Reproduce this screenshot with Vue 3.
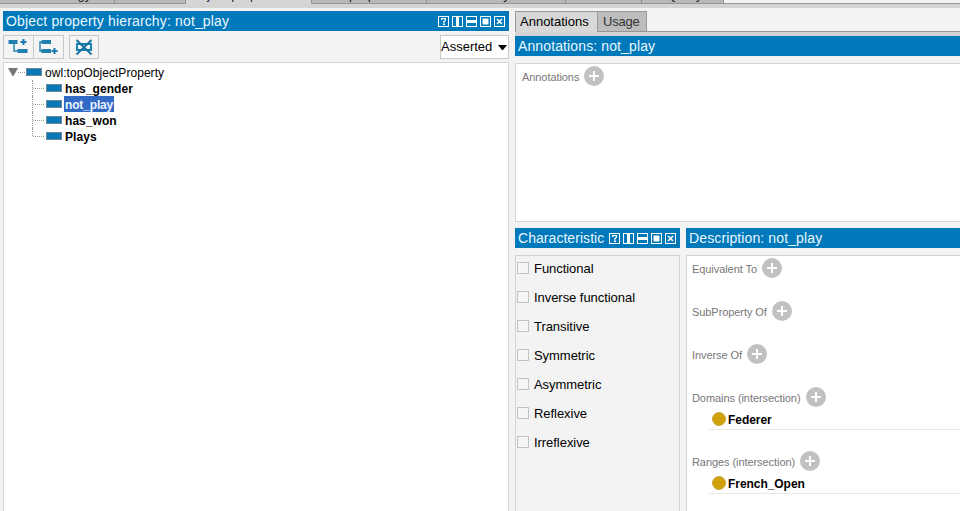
<script setup>
const topTabs = [
  { label: 'Active ontology', width: 115, pad: 3 },
  { label: 'Classes', width: 71, pad: 14 },
  { label: 'Object properties', width: 126, pad: 4, active: true },
  { label: 'Data properties', width: 115, pad: 6 },
  { label: 'Individuals by class', width: 139, pad: 4 },
  { label: 'OWLViz', width: 76, pad: 14 },
  { label: 'DL Query', width: 82, pad: 5 },
]
const properties = ['has_gender', 'not_play', 'has_won', 'Plays']
const selected = 'not_play'
const characteristics = [
  'Functional', 'Inverse functional', 'Transitive', 'Symmetric',
  'Asymmetric', 'Reflexive', 'Irreflexive',
]
const sections = [
  { label: 'Equivalent To' },
  { label: 'SubProperty Of' },
  { label: 'Inverse Of' },
  { label: 'Domains (intersection)', item: 'Federer' },
  { label: 'Ranges (intersection)', item: 'French_Open' },
]
const controls = ['help', 'vsplit', 'hsplit', 'max', 'close']
</script>

<template>
  <div class="window">
    <nav class="top-tabs">
      <div
        v-for="t in topTabs"
        :key="t.label"
        class="top-tab"
        :class="{ active: t.active }"
        :style="{ width: t.width + 'px', paddingLeft: t.pad + 'px' }"
      >{{ t.label }}</div>
      <div class="top-rest"></div>
    </nav>
    <div class="band"></div>

    <main class="body">
      <section class="left">
        <header class="title">
          <span class="title-text hierarchy-title">Object property hierarchy: not_play</span>
          <span class="controls">
            <svg v-for="c in controls" :key="c" class="control" viewBox="0 0 11 11">
              <rect x=".5" y=".5" width="10" height="10" />
              <path v-if="c === 'help'" class="fill" d="M3 2h5v1H3zM3 3h1.500v1H3zM6.500 3h1.500v2H6.500zM5 5h2v1.500H5zM5 7.500h2v1.500H5z" />
              <path v-else-if="c === 'vsplit'" class="fill" d="M4 1h3v9H4z" />
              <path v-else-if="c === 'hsplit'" class="fill" d="M1 4h9v3H1z" />
              <path v-else-if="c === 'max'" class="fill" d="M2.500 2.500h6v6h-6z" />
              <path v-else class="cross" d="M3 3l5 5M8 3L3 8" />
            </svg>
          </span>
        </header>
        <div class="toolbar">
          <button class="tool">
            <svg width="28" height="22" viewBox="0 0 28 22">
              <path class="blue" d="M3.500 4h9v4h-9zM12.500 13h10v4h-10z" />
              <path class="line" d="M9 8v7h4" />
              <path class="plus" d="M18.500 3v6M15.500 6h6" />
            </svg>
          </button>
          <button class="tool second">
            <svg width="28" height="22" viewBox="0 0 28 22">
              <path class="blue" d="M6.500 4h9.500v4H6.500zM6.500 13H16v4H6.500z" />
              <path class="line" d="M7 6H5v9h2" />
              <path class="plus" d="M19.500 12v6M16.500 15h6" />
            </svg>
          </button>
          <button class="tool third">
            <svg width="28" height="22" viewBox="0 0 28 22">
              <rect class="box" x="7" y="8" width="14" height="6" />
              <path class="strike" d="M6.500 4l15 14.500M21.500 4l-15 14.500" />
            </svg>
          </button>
          <div class="select">
            <span>Asserted</span>
            <svg width="9" height="5" viewBox="0 0 9 5"><path d="M0 0h9L5 5H4z" /></svg>
          </div>
        </div>
        <div class="tree">
          <div class="root">
            <svg class="arrow" width="10" height="8" viewBox="0 0 10 8"><path d="M0 0h10L5.500 8h-1z" /></svg>
            <i class="dots"></i>
            <i class="prop"></i>
            <span class="root-name">owl:topObjectProperty</span>
          </div>
          <div class="children">
            <div v-for="p in properties" :key="p" class="child">
              <i class="stem"></i>
              <i class="branch"></i>
              <i class="prop"></i>
              <span class="name" :class="{ selected: p === selected }">{{ p }}</span>
            </div>
          </div>
        </div>
      </section>

      <section class="right">
        <div class="tabs">
          <div class="tab current">Annotations</div>
          <div class="tab usage">Usage</div>
        </div>
        <div class="tab-band"></div>
        <header class="title wide"><span class="title-text">Annotations: not_play</span></header>
        <div class="annotations">
          <div class="label-row">
            <span>Annotations</span>
            <svg class="add" viewBox="0 0 20 20"><circle cx="10" cy="10" r="10" /><path d="M10 5v10M5 10h10" /></svg>
          </div>
        </div>
        <div class="lower">
          <section class="traits">
            <header class="title">
              <span class="title-text">Characteristic</span>
              <span class="controls">
                <svg v-for="c in controls" :key="c" class="control" viewBox="0 0 11 11">
                  <rect x=".5" y=".5" width="10" height="10" />
                  <path v-if="c === 'help'" class="fill" d="M3 2h5v1H3zM3 3h1.500v1H3zM6.500 3h1.500v2H6.500zM5 5h2v1.500H5zM5 7.500h2v1.500H5z" />
                  <path v-else-if="c === 'vsplit'" class="fill" d="M4 1h3v9H4z" />
                  <path v-else-if="c === 'hsplit'" class="fill" d="M1 4h9v3H1z" />
                  <path v-else-if="c === 'max'" class="fill" d="M2.500 2.500h6v6h-6z" />
                  <path v-else class="cross" d="M3 3l5 5M8 3L3 8" />
                </svg>
              </span>
            </header>
            <div class="trait-list">
              <label v-for="c in characteristics" :key="c" class="trait">
                <i class="check"></i><span>{{ c }}</span>
              </label>
            </div>
          </section>
          <section class="description">
            <header class="title"><span class="title-text">Description: not_play</span></header>
            <div class="desc-list">
              <div v-for="s in sections" :key="s.label" class="desc-section" :class="{ filled: s.item }">
                <div class="label-row">
                  <span>{{ s.label }}</span>
                  <svg class="add" viewBox="0 0 20 20"><circle cx="10" cy="10" r="10" /><path d="M10 5v10M5 10h10" /></svg>
                </div>
                <div v-if="s.item" class="item"><i class="dot"></i><span>{{ s.item }}</span></div>
              </div>
            </div>
          </section>
        </div>
      </section>
    </main>
  </div>
</template>

<style>
body { margin: 0; overflow: hidden; }
</style>

<style scoped>
* { box-sizing: border-box; }
.window {
  width: 960px; height: 511px; overflow: hidden;
  display: flex; flex-direction: column;
  background: #f3f3f3; color: #000;
  font: 13px "Liberation Sans", Arial, sans-serif;
}
.top-tabs { display: flex; height: 4px; flex: none; }
.top-tab {
  height: 4px; overflow: hidden; white-space: nowrap;
  display: flex; align-items: flex-end; line-height: 16px;
  background: #b8b8b8; border-right: 1px solid #909090; border-bottom: 1px solid #969696;
  color: #222;
}
.top-tab.active { background: #d5d5d5; border-bottom-color: #d5d5d5; }
.top-rest { flex: 1; border-bottom: 1px solid #969696; }
.band { height: 4px; flex: none; background: #d4d4d4; }
.body { flex: 1; min-height: 0; display: flex; gap: 6px; padding: 3px 0 0 3px; }
.left { width: 506px; display: flex; flex-direction: column; flex: none; }
.title {
  height: 20px; flex: none; display: flex; align-items: center; justify-content: space-between;
  padding: 0 4px 0 3px; background: #0079ba; color: #e9f7ff;
}
.title-text { font-size: 14px; letter-spacing: .12px; line-height: 20px; white-space: nowrap; }
.hierarchy-title { letter-spacing: .15px; }
.traits .title-text { letter-spacing: .05px; }
.controls { display: flex; gap: 3px; }
.control { width: 11px; height: 11px; fill: none; stroke: #fff; stroke-width: 1; display: block; }
.control .fill { fill: #fff; stroke: none; }
.control .cross { stroke-width: 1.7; }
.toolbar { display: flex; margin-top: 4px; height: 24px; flex: none; }
.tool {
  width: 31px; height: 24px; padding: 0; border: 1px solid #c8c8c8; background: #f4f4f4;
  display: flex; align-items: center; justify-content: center;
}
.second { margin-left: -1px; }
.third { margin-left: 5px; width: 30px; }
.blue { fill: #217fae; }
.line { fill: none; stroke: #217fae; stroke-width: 1.4; }
.plus { fill: none; stroke: #1879ac; stroke-width: 2; }
.box { fill: none; stroke: #1983b7; stroke-width: 2; }
.strike { fill: none; stroke: #176f9e; stroke-width: 1.8; }
.select {
  margin-left: auto; width: 69px; border: 1px solid #c8c8c8; background: #fff;
  display: flex; align-items: center; justify-content: space-between; padding: 0 1px 0 0;
  line-height: 22px;
}
.tree { margin-top: 3px; flex: 1; background: #fff; border: 1px solid #d5d5d5; border-bottom: 0; padding: 1px 0 0 4px; font-size: 12px; }
.root { height: 16px; display: flex; align-items: center; }
.arrow { fill: #777; }
.dots { width: 7px; margin: 0 1px 0 0; border-top: 1px dotted #999; }
.prop { width: 16px; height: 8px; background: #0878b3; border: 1px solid #6d8792; flex: none; }
.root-name { margin-left: 3px; letter-spacing: .05px; line-height: 16px; padding-top: 1px; }
.children { padding-left: 24px; }
.child { height: 16px; display: flex; align-items: center; }
.stem { align-self: stretch; border-left: 1px dotted #999; }
.child:last-child .stem { height: 8px; }
.branch { width: 11px; border-top: 1px dotted #999; margin-right: 2px; }
.name { font-weight: bold; height: 16px; line-height: 18px; margin-left: 2px; padding: 0 1px; letter-spacing: .05px; }
.selected { background: #316ac5; color: #e8f2ff; letter-spacing: -.15px; }
.right { flex: 1; min-width: 0; display: flex; flex-direction: column; }
.tabs { height: 21px; flex: none; display: flex; border-bottom: 1px solid #969696; }
.tab { height: 20px; border: 1px solid #999; border-bottom: 0; line-height: 19px; white-space: nowrap; }
.current { width: 82px; height: 21px; background: #d8d8d8; padding-left: 4px; border-right: 0; }
.usage { width: 50px; background: #bdbdbd; color: #333; padding-left: 5px; letter-spacing: -.2px; }
.tab-band { height: 4px; flex: none; background: #d4d4d4; }
.annotations { margin-top: 7px; height: 159px; flex: none; background: #fff; border: 1px solid #d3d6d3; border-right: 0; padding: 2px 0 0 6px; }
.label-row { height: 20px; display: flex; align-items: center; gap: 5px; color: #777; font-size: 11px; letter-spacing: -.07px; white-space: nowrap; }
.label-row span { padding-top: 1px; }
.add { width: 20px; height: 20px; flex: none; fill: #c1c1c1; }
.add path { fill: none; stroke: #fff; stroke-width: 2; }
.lower { margin-top: 6px; flex: 1; min-height: 0; display: flex; gap: 6px; }
.traits { width: 165px; flex: none; display: flex; flex-direction: column; }
.trait-list { flex: 1; margin-top: 7px; border: 1px solid #d4d4d4; border-bottom: 0; padding-left: 1px; }
.trait { height: 29px; display: flex; align-items: flex-start; padding-top: 6px; }
.check { width: 12px; height: 12px; border: 1px solid #c3c3c3; background: #f5f5f5; flex: none; }
.trait span { margin-left: 5px; line-height: 14px; letter-spacing: -.05px; white-space: nowrap; }
.description { flex: 1; min-width: 0; display: flex; flex-direction: column; }
.desc-list { flex: 1; margin-top: 7px; background: #fff; border: 1px solid #d4d4d4; border-width: 1px 0 0 1px; padding: 2px 0 0 5px; }
.desc-section { margin-bottom: 23px; }
.desc-section.filled { margin-bottom: 21px; }
.item { margin-left: 17px; margin-top: 1px; height: 22px; display: flex; align-items: center; border-bottom: 1px solid #e8e8e8; font-size: 12px; font-weight: bold; }
.dot { width: 14px; height: 14px; margin-left: 3px; border-radius: 50%; background: #cfa20c; border: 1px solid #c5a83c; }
.item span { margin-left: 2px; padding-top: 2px; letter-spacing: -.05px; }
</style>
